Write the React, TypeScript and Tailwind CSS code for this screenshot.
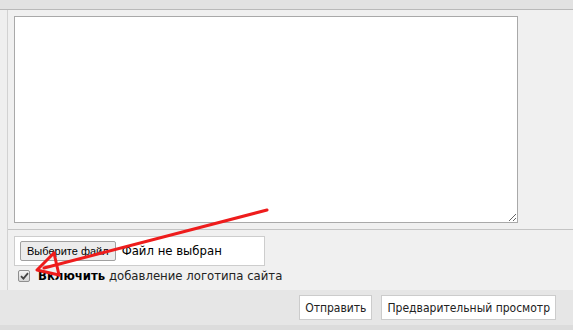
import React from 'react';

const font = { fontFamily: '"DejaVu Sans Condensed", "DejaVu Sans", Verdana, sans-serif' };

const Arrow = () => (
  <svg className="absolute left-0 top-0 pointer-events-none" width="573" height="330">
    <g stroke="#ee1c1c" strokeWidth="3" fill="none" strokeLinecap="round" strokeLinejoin="round">
      <line x1="267" y1="210" x2="44" y2="268" />
      <polyline points="54,253 37,270 59,275" />
      <line x1="54" y1="253" x2="59" y2="275" />
    </g>
  </svg>
);

const Checkbox = () => (
  <span className="w-[12px] h-[12px] flex items-center justify-center rounded-[2px] border border-[#8f8f8f] bg-gradient-to-b from-[#f4f4f4] to-[#d6d6d6]">
    <svg width="9" height="8" viewBox="0 0 9 8">
      <path d="M1 4.2 L3.4 6.6 L8 1.2" stroke="#444" strokeWidth="1.8" fill="none" />
    </svg>
  </span>
);

export default function App() {
  return (
    <div className="relative w-[573px] h-[330px] overflow-hidden bg-[#f0f0f0] text-[13px] text-[#222]" style={font}>
      <div className="h-[10px] bg-[#e2e2e2] border-b border-[#b9b9b9]" />
      <div className="flex h-[280px]">
        <div className="w-[8px] bg-[#efefef] border-r border-[#d2d2d2]" />
        <div className="flex-1 flex flex-col">
          <div className="h-[220px] pl-[6px] pt-[6px] border-b border-[#c4c4c4]">
            <textarea className="block w-[504px] h-[207px] bg-white border border-[#a9a9a9] resize" />
          </div>
          <div className="pl-[6px] pt-[6px]">
            <div className="w-[251px] h-[30px] bg-white border border-[#cdcdcd] flex items-center pl-[5px] gap-[6px]">
              <span
                className="h-[20px] px-[6px] flex items-center bg-[#ececec] border border-[#a0a0a0] rounded-[2px] text-[11px] text-black"
                style={{ fontFamily: '"Liberation Sans", Arial, sans-serif' }}
              >
                Выберите файл
              </span>
              <span className="text-black">Файл не выбран</span>
            </div>
            <label className="flex items-center h-[18px] mt-[1px] pl-[4px] gap-[8px]">
              <Checkbox />
              <span>
                <b className="text-black">Включить</b> добавление логотипа сайта
              </span>
            </label>
          </div>
        </div>
      </div>
      <div className="h-[35px] bg-[#e6e6e6] flex items-center justify-end pr-[17px] gap-[9px]">
        <button className="h-[25px] px-[5px] bg-white border border-[#cccccc] text-[12px] text-[#222]">Отправить</button>
        <button className="h-[25px] px-[5px] bg-white border border-[#cccccc] text-[12px] text-[#222]">Предварительный просмотр</button>
      </div>
      <div className="h-[5px] bg-[#dcdcdc]" />
      <Arrow />
    </div>
  );
}
